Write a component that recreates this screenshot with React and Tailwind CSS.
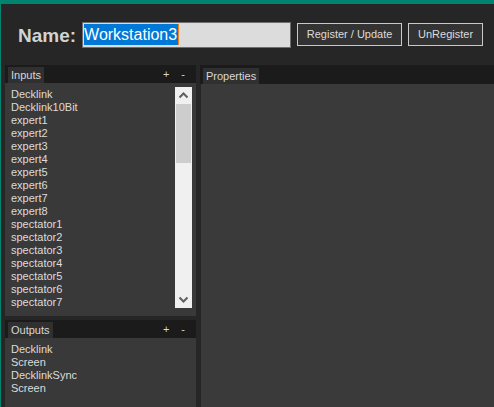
import React from "react";

const inputs = [
  "Decklink", "Decklink10Bit", "expert1", "expert2", "expert3", "expert4", "expert5", "expert6", "expert7", "expert8",
  "spectator1", "spectator2", "spectator3", "spectator4", "spectator5", "spectator6", "spectator7",
];
const outputs = ["Decklink", "Screen", "DecklinkSync", "Screen"];

function Chevron({ up }) {
  return (
    <svg width="17" height="17" viewBox="0 0 17 17">
      <polyline
        points={up ? "4.5,10.5 8.5,6.5 12.5,10.5" : "4.5,6.5 8.5,10.5 12.5,6.5"}
        fill="none"
        stroke="#606060"
        strokeWidth="2"
      />
    </svg>
  );
}

function Strip({ label, plusMinus, h = "h-[18px]" }) {
  return (
    <div className={`${h} bg-[#1b1b1b] flex items-end pl-[3px] pr-[11px]`}>
      <div className="h-[16px] px-[3px] bg-[#303030] text-[11px] leading-[16px] text-[#d8d8d8]">{label}</div>
      {plusMinus && (
        <div className="ml-auto flex gap-[12px] self-center text-[11px] leading-[14px] text-[#d8d8d8]">
          <span>+</span>
          <span>-</span>
        </div>
      )}
    </div>
  );
}

export default function App() {
  return (
    <div
      className="w-[494px] h-[407px] bg-[#262626] border-t-4 border-l border-[#00836f] flex flex-col overflow-hidden"
      style={{ fontFamily: '"Liberation Sans", Arial, sans-serif' }}
    >
      <div className="h-[61px] flex items-center shrink-0">
        <span className="ml-[17px] text-[19px] font-bold text-[#d2d2d2] leading-none mt-[1px]">Name:</span>
        <div className="ml-[6px] w-[209px] h-[26px] bg-[#dcdcdc] border border-[#6e6e6e] flex items-center pl-[1px]">
          <span className="bg-[#0078d7] text-white text-[16px] leading-[21px] h-[21px] pr-[1px]">Workstation3</span>
          <span className="w-[1px] h-[21px] bg-[#f08020]"></span>
        </div>
        <button className="ml-[6px] w-[105px] h-[23px] border border-[#c8c8c8] bg-[#333333] text-[11px] text-[#dcdcdc] leading-none">
          Register / Update
        </button>
        <button className="ml-[6px] w-[75px] h-[23px] border border-[#c8c8c8] bg-[#333333] text-[11px] text-[#dcdcdc] leading-none">
          UnRegister
        </button>
      </div>
      <div className="flex flex-1 min-h-0">
        <div className="ml-[4px] w-[191px] flex flex-col">
          <Strip label="Inputs" plusMinus />
          <div className="h-[233px] bg-[#393939] flex pl-[6px] pt-[4px]">
            <div className="flex-1 pt-[1px]">
              {inputs.map((t, i) => (
                <div key={i} className="text-[11px] leading-[13px] text-[#dcdcdc]">{t}</div>
              ))}
            </div>
            <div className="w-[17px] h-[221px] bg-[#f0f0f0] mr-[4px] flex flex-col items-center">
              <Chevron up />
              <div className="w-[15px] h-[59px] bg-[#cdcdcd]"></div>
              <div className="flex-1"></div>
              <Chevron />
            </div>
          </div>
          <div className="h-[4px]"></div>
          <Strip label="Outputs" plusMinus />
          <div className="flex-1 bg-[#393939] pl-[6px] pt-[5px]">
            {outputs.map((t, i) => (
              <div key={i} className="text-[11px] leading-[13px] text-[#dcdcdc]">{t}</div>
            ))}
          </div>
        </div>
        <div className="ml-[4px] flex-1 flex flex-col">
          <Strip label="Properties" h="h-[19px]" />
          <div className="flex-1 bg-[#3a3a3a] border-l border-[#262626]"></div>
        </div>
      </div>
    </div>
  );
}
